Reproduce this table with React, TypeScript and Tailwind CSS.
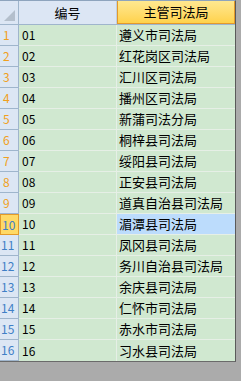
const rows = [
  "遵义市司法局",
  "红花岗区司法局",
  "汇川区司法局",
  "播州区司法局",
  "新蒲司法分局",
  "桐梓县司法局",
  "绥阳县司法局",
  "正安县司法局",
  "道真自治县司法局",
  "湄潭县司法局",
  "凤冈县司法局",
  "务川自治县司法局",
  "余庆县司法局",
  "仁怀市司法局",
  "赤水市司法局",
  "习水县司法局",
];

const font = { fontFamily: '"Noto Sans CJK SC", "Liberation Sans", sans-serif' };

export default function App() {
  const activeRow = 9;

  return (
    <div className="w-[241px] h-[381px] bg-[#ababab] overflow-hidden text-[12px] text-black" style={font}>
      <div className="w-[236px] border-t border-[#8ea4bd] border-r border-r-[#5a5a5a] border-b border-b-[#6a6a6a] bg-[#d0e8d0]">
        {/* header */}
        <div className="flex h-[24px] border-b border-[#9fb5cc]">
          <div className="w-[19px] shrink-0 bg-[#dce6f4] border-r border-[#9fb5cc] flex items-end justify-end p-[3px]">
            <svg width="11" height="11" viewBox="0 0 11 11">
              <polygon points="11,0 11,11 0,11" fill="#b4bfcc" />
            </svg>
          </div>
          <div className="w-[98px] shrink-0 bg-[#dce6f4] border-r border-[#c0cfe0] flex items-center justify-center text-[13px]">
            编号
          </div>
          <div className="flex-1 bg-gradient-to-b from-[#ffe88f] to-[#ffd24a] border border-[#e39a2a] border-t-0 flex items-center justify-center text-[13px]">
            主管司法局
          </div>
        </div>

        {rows.map((name, i) => {
          const active = i === activeRow;
          const last = i === rows.length - 1;
          return (
            <div key={i} className="flex h-[21px]">
              <div
                className={
                  active
                    ? "w-[19px] shrink-0 bg-[#ffd966] border border-[#e39a2a] flex items-center pl-[1px] text-[#3f7fc6]"
                    : `w-[19px] shrink-0 bg-[#dce6f4] border-r border-b border-[#9fb5cc] flex items-center pl-[1px] ${
                        i < 9 ? "text-[#f0a020] pl-[3px]" : "text-[#3f7fc6]"
                      }`
                }
              >
                {i + 1}
              </div>
              <div
                className={`w-[98px] shrink-0 border-r border-[#e6efe6] flex items-center pl-[3px] ${
                  last ? "" : "border-b"
                }`}
              >
                {String(i + 1).padStart(2, "0")}
              </div>
              <div
                className={`flex-1 border-[#e6efe6] flex items-center pl-[2px] text-[13px] ${
                  active ? "bg-[#bcdcfc]" : ""
                } ${last ? "" : "border-b"}`}
              >
                {name}
              </div>
            </div>
          );
        })}
      </div>
    </div>
  );
}
